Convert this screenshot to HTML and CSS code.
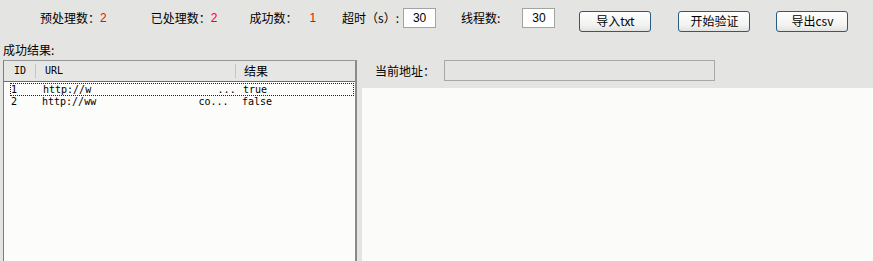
FILE: index.html
```html
<!DOCTYPE html>
<html lang="zh-CN">
<head>
  <meta charset="UTF-8" />
  <title>批量验证</title>
  <link rel="stylesheet" href="styles.css">
</head>
<body>
  <div class="toolbar">
    <span class="label l-pre">预处理数：</span><span class="count">2</span>
    <span class="label l-done">已处理数：</span><span class="count">2</span>
    <span class="label l-ok">成功数：</span><span class="count c-ok">1</span>
    <span class="label l-timeout">超时（s）:</span><input class="num" type="text" value="30" />
    <span class="label l-thread">线程数:</span><input class="num" type="text" value="30" />
    <button class="btn b-import">导入txt</button>
    <button class="btn b-start">开始验证</button>
    <button class="btn b-export">导出csv</button>
  </div>

  <div class="caption">成功结果:</div>

  <div class="main">
    <div class="listbox">
      <div class="list-head">
        <span class="col-id">ID</span>
        <span class="col-url">URL</span>
        <span class="col-res">结果</span>
      </div>
      <div class="row focused">
        <span class="col-id">1</span>
        <span class="col-url">http://w                     ...</span>
        <span class="col-res">true</span>
      </div>
      <div class="row">
        <span class="col-id">2</span>
        <span class="col-url">http://ww                 co...</span>
        <span class="col-res">false</span>
      </div>
    </div>

    <div class="viewer">
      <div class="address">
        <span class="label">当前地址：</span>
        <div class="addr-box"></div>
      </div>
      <div class="page"></div>
    </div>
  </div>
</body>
</html>
```

FILE: styles.css
```css
* {
  box-sizing: border-box;
  padding: 0;
  margin: 0;
}

body {
  font-family: "Noto Sans CJK SC", "Liberation Sans", sans-serif;
  font-size: 12px;
  background: #e4e5e3;
  color: #000;
  width: 873px;
  height: 261px;
  overflow: hidden;
}

.toolbar {
  display: flex;
  align-items: center;
  height: 35px;
}

.label {
  line-height: 14px;
}

.count {
  color: #f00;
  font-family: "Liberation Sans", sans-serif;
  font-size: 12px;
}

.l-pre { margin-left: 40px; }
.l-done { margin-left: 44px; }
.l-ok { margin-left: 32px; }
.c-ok { margin-left: 12px; }
.l-timeout { margin-left: 26px; }
.l-thread { margin-left: 25px; }

.num {
  width: 33px;
  height: 20px;
  margin-left: 4px;
  margin-top: 1px;
  border: 1px solid #a3a3a3;
  background: #fff;
  text-align: center;
  font-family: "Liberation Sans", sans-serif;
  font-size: 12px;
  color: #000;
  outline: none;
}

.l-thread + .num { margin-left: 22px; }

.btn {
  width: 72px;
  height: 21px;
  margin-top: 7px;
  border: 1px solid #2a5a80;
  border-radius: 3px;
  background: linear-gradient(#ffffff, #f2f2f0 70%, #e2e2e0);
  font-family: "Noto Sans CJK SC", sans-serif;
  font-size: 12px;
  color: #000;
  line-height: 18px;
}

.b-import { margin-left: 24px; }
.b-start { margin-left: 27px; }
.b-export { margin-left: 26px; }

.caption {
  height: 25px;
  padding: 9px 0 0 3px;
  line-height: 12px;
}

.main {
  display: flex;
  height: 220px;
}

.listbox {
  margin-left: 3px;
  width: 354px;
  border: 1px solid #999;
  border-left-color: #7c7c7c;
  border-right: 2px solid #8a8a8a;
  background: #fcfdfb;
  font-family: "DejaVu Sans Mono", monospace;
  font-size: 10px;
}

.list-head {
  display: flex;
  align-items: center;
  height: 21px;
  background: #e6e7e5;
  border-bottom: 1px solid #6e6e6e;
}

.list-head span {
  height: 14px;
  line-height: 14px;
}

.list-head .col-url,
.list-head .col-res {
  border-left: 1px solid #c4c4c4;
}

.list-head .col-res {
  font-family: "Noto Sans CJK SC", sans-serif;
  font-size: 12px;
}

.col-id {
  width: 31px;
  padding-left: 10px;
}

.col-url {
  width: 200px;
  padding-left: 9px;
  white-space: pre;
}

.col-res {
  padding-left: 8px;
}

.row {
  display: flex;
  height: 13px;
  line-height: 12px;
  margin: 0 1px 0 6px;
}

.row .col-id {
  width: 25px;
  padding-left: 1px;
}

.row .col-url {
  width: 200px;
  padding-left: 7px;
}

.row .col-res {
  padding-left: 7px;
}

.focused {
  border: 1px dotted #222;
  margin-top: 1px;
  height: 13px;
}

.focused .col-id {
  padding-left: 0;
}

.viewer {
  flex: 1;
  margin-left: 5px;
  display: flex;
  flex-direction: column;
}

.address {
  display: flex;
  align-items: flex-start;
  height: 28px;
  padding-left: 13px;
}

.address .label {
  margin-top: 4px;
  width: 69px;
}

.addr-box {
  width: 271px;
  height: 21px;
  border: 1px solid #a8a8a8;
}

.page {
  flex: 1;
  background: #fbfcfa;
}
```
